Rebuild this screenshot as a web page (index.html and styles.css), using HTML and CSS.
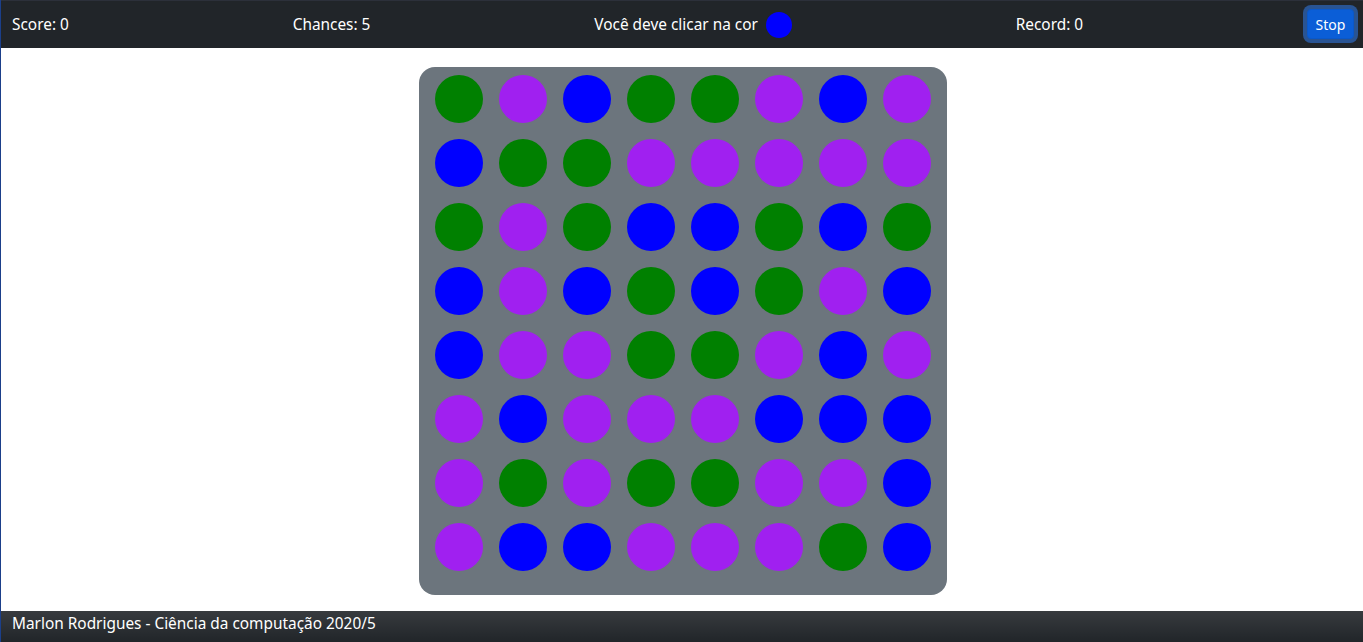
FILE: index.html
```html
<!DOCTYPE html>
<html lang="pt-BR">
<head>
<meta charset="utf-8">
<title>Jogo das cores</title>
<link rel="stylesheet" href="styles.css">
</head>
<body>
<div class="page">
  <header class="topbar">
    <span class="item">Score: 0</span>
    <span class="item">Chances: 5</span>
    <span class="item target">Você deve clicar na cor <span class="dot blue"></span></span>
    <span class="item">Record: 0</span>
    <button class="stop">Stop</button>
  </header>
  <main class="main">
    <div class="board">
      <span class="ball green"></span><span class="ball purple"></span><span class="ball blue"></span><span class="ball green"></span><span class="ball green"></span><span class="ball purple"></span><span class="ball blue"></span><span class="ball purple"></span>
      <span class="ball blue"></span><span class="ball green"></span><span class="ball green"></span><span class="ball purple"></span><span class="ball purple"></span><span class="ball purple"></span><span class="ball purple"></span><span class="ball purple"></span>
      <span class="ball green"></span><span class="ball purple"></span><span class="ball green"></span><span class="ball blue"></span><span class="ball blue"></span><span class="ball green"></span><span class="ball blue"></span><span class="ball green"></span>
      <span class="ball blue"></span><span class="ball purple"></span><span class="ball blue"></span><span class="ball green"></span><span class="ball blue"></span><span class="ball green"></span><span class="ball purple"></span><span class="ball blue"></span>
      <span class="ball blue"></span><span class="ball purple"></span><span class="ball purple"></span><span class="ball green"></span><span class="ball green"></span><span class="ball purple"></span><span class="ball blue"></span><span class="ball purple"></span>
      <span class="ball purple"></span><span class="ball blue"></span><span class="ball purple"></span><span class="ball purple"></span><span class="ball purple"></span><span class="ball blue"></span><span class="ball blue"></span><span class="ball blue"></span>
      <span class="ball purple"></span><span class="ball green"></span><span class="ball purple"></span><span class="ball green"></span><span class="ball green"></span><span class="ball purple"></span><span class="ball purple"></span><span class="ball blue"></span>
      <span class="ball purple"></span><span class="ball blue"></span><span class="ball blue"></span><span class="ball purple"></span><span class="ball purple"></span><span class="ball purple"></span><span class="ball green"></span><span class="ball blue"></span>
    </div>
  </main>
  <footer class="footer">Marlon Rodrigues - Ciência da computação 2020/5</footer>
</div>
</body>
</html>
```
FILE: styles.css
```css
* { box-sizing: border-box; }
html, body { margin: 0; padding: 0; height: 100%; }
body {
  font-family: "Noto Sans", "Open Sans", sans-serif;
  font-size: 15.4px;
  color: #fff;
  background: #fff;
}
.page {
  height: 642px;
  display: flex;
  flex-direction: column;
  border-left: 1px solid #1b3f8a;
}
.topbar {
  height: 48px;
  flex: none;
  background: #212529;
  border-top: 1px solid #2c303a;
  display: flex;
  align-items: center;
  justify-content: space-between;
  padding: 0 9px 0 11px;
}
.item { white-space: nowrap; line-height: 24px; }
.target { display: flex; align-items: center; gap: 8px; }
.dot {
  display: inline-block;
  width: 26px;
  height: 26px;
  border-radius: 50%;
}
.stop {
  font-family: inherit;
  font-size: 14px;
  color: #fff;
  background: #0b5ed7;
  border: 1px solid #0a58ca;
  border-radius: 4px;
  width: 47px;
  height: 30px;
  padding: 0;
  box-shadow: 0 0 0 4px rgba(49, 132, 253, 0.5);
  margin-top: -1px;
}
.main {
  flex: 1;
  display: flex;
  justify-content: center;
  align-items: flex-start;
  padding-top: 19px;
  padding-left: 2px;
}
.board {
  background: #6c757d;
  border-radius: 16px;
  padding: 8px 16px 24px;
  display: grid;
  grid-template-columns: repeat(8, 48px);
  grid-auto-rows: 48px;
  gap: 16px;
}
.ball { display: block; width: 48px; height: 48px; border-radius: 50%; }
.green { background: #008000; }
.purple { background: #a020f0; }
.blue { background: #0000ff; }
.footer {
  height: 31px;
  flex: none;
  background: #212529 linear-gradient(180deg, rgba(255,255,255,0.1), rgba(255,255,255,0));
  padding: 0 11px;
  line-height: 26px;
  white-space: nowrap;
}
```
